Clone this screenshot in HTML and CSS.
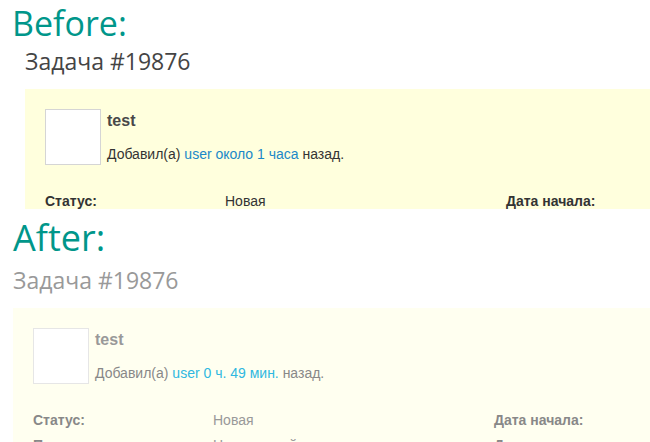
FILE: index.html
```html
<!DOCTYPE html>
<html lang="ru">
<head>
<meta charset="utf-8">
<title>Before / After</title>
<link rel="stylesheet" href="styles.css">
</head>
<body>
<section class="shot before">
  <h1 class="label">Before:</h1>
  <div class="page">
    <h2 class="title">Задача #19876</h2>
    <div class="issue">
      <div class="head">
        <div class="avatar"></div>
        <div class="meta">
          <h3 class="subject">test</h3>
          <p class="author">Добавил(а) <a href="#">user</a> <a href="#">около 1 часа</a> назад.</p>
        </div>
      </div>
      <div class="attrs">
        <div class="attr"><span class="k">Статус:</span><span class="v">Новая</span></div>
        <div class="attr"><span class="k">Дата начала:</span><span class="v"></span></div>
      </div>
    </div>
  </div>
</section>
<section class="shot after">
  <h1 class="label">After:</h1>
  <div class="page">
    <h2 class="title">Задача #19876</h2>
    <div class="issue">
      <div class="head">
        <div class="avatar"></div>
        <div class="meta">
          <h3 class="subject">test</h3>
          <p class="author">Добавил(а) <a href="#">user</a> <a href="#">0 ч. 49 мин.</a> назад.</p>
        </div>
      </div>
      <div class="attrs">
        <div class="attr"><span class="k">Статус:</span><span class="v">Новая</span></div>
        <div class="attr"><span class="k">Дата начала:</span><span class="v"></span></div>
        <div class="attr"><span class="k">Приоритет:</span><span class="v">Нормальный</span></div>
        <div class="attr"><span class="k">Дата выполнения:</span><span class="v"></span></div>
      </div>
    </div>
  </div>
</section>
</body>
</html>
```
FILE: styles.css
```css
* { box-sizing: border-box; }
html, body { margin: 0; padding: 0; background: #fff; }
body {
  width: 650px;
  height: 442px;
  overflow: hidden;
  font-family: "Liberation Sans", Arial, sans-serif;
}
.shot { overflow: hidden; }
.before { height: 210px; }
.after { height: 232px; }

.label {
  margin: 0;
  font-family: "Open Sans", sans-serif;
  font-weight: 400;
  color: #00968a;
  line-height: 1;
}
.before .label { font-size: 34px; padding: 6px 0 0 12px; height: 46px; }
.after .label { font-size: 36px; padding: 10px 0 0 13px; height: 55px; }

.before .page { padding-left: 25px; }
.after .page { padding-left: 13px; }

.title {
  margin: 0;
  font-family: "Open Sans", sans-serif;
  font-weight: 400;
  font-size: 23px;
  line-height: 30px;
  height: 43px;
}
.before .title { color: #444; }
.after .title { color: #999; }

.issue { padding: 20px 0 0 20px; }
.before .issue { background: #ffffdd; }
.after .issue { background: #fffff0; }

.head { display: flex; gap: 6px; }
.avatar {
  flex: none;
  width: 56px;
  height: 56px;
  background: #fff;
  border: 1px solid #d5d5d5;
}
.after .avatar { border-color: #e6e6e6; }
.meta { padding-top: 3px; }
.subject {
  margin: 0;
  font-size: 16px;
  font-weight: bold;
  line-height: 18px;
}
.author {
  margin: 16px 0 0;
  font-size: 14px;
  line-height: 16px;
}
.author a { text-decoration: none; }

.before .subject { color: #484848; }
.before .author { color: #333; }
.before .author a { color: #1a88c8; }
.after .subject { color: #999; }
.after .author { color: #888; }
.after .author a { color: #2fb8e0; }

.attrs {
  display: grid;
  grid-template-columns: 461px 1fr;
  row-gap: 9px;
  margin-top: 28px;
  font-size: 14px;
  line-height: 16px;
}
.attr { display: grid; grid-template-columns: 180px 1fr; }
.k { font-weight: bold; }
.before .k { color: #333; }
.before .v { color: #333; }
.after .k { color: #888; }
.after .v { color: #999; }
```
